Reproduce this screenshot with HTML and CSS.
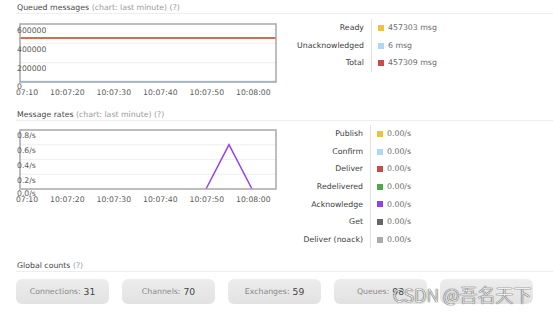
FILE: index.html
```html
<!DOCTYPE html>
<html lang="en">

<head>
    <meta charset="UTF-8">
    <meta name="viewport" content="width=device-width, initial-scale=1.0">
    <title>Overview</title>
    <link rel="stylesheet" href="styles.css">
</head>

<body>
    <div class="page">
        <h2 class="title">Queued messages <span class="muted">(chart: last minute) (?)</span></h2>
        <div class="row">
            <svg class="chart" width="264" height="82" viewBox="16 18 264 82">
                <line class="grid" x1="20" y1="43.3" x2="276" y2="43.3" />
                <line class="grid" x1="20" y1="62.7" x2="276" y2="62.7" />
                <polyline class="series" stroke="#edc240" points="20,38 276,38" />
                <polyline class="series" stroke="#cb4b4b" points="20,38 276,38" />
                <polyline class="series" stroke="#afd8f8" points="20,81.4 276,81.4" />
                <rect class="frame" x="20" y="24" width="256" height="58" />
                <text class="tick" x="17" y="32.8">600000</text>
                <text class="tick" x="17" y="51.8">400000</text>
                <text class="tick" x="17" y="70.8">200000</text>
                <text class="tick" x="17" y="88.8">0</text>
                <text class="tick mid" x="20.8" y="95">10:07:10</text>
                <text class="tick mid" x="67.3" y="95">10:07:20</text>
                <text class="tick mid" x="113.8" y="95">10:07:30</text>
                <text class="tick mid" x="160.3" y="95">10:07:40</text>
                <text class="tick mid" x="206.8" y="95">10:07:50</text>
                <text class="tick mid" x="253.3" y="95">10:08:00</text>
            </svg>
            <div class="legend legend-queued">
                <span class="label">Ready</span>
                <span class="value"><i class="swatch yellow"></i>457303 msg</span>
                <span class="label">Unacknowledged</span>
                <span class="value"><i class="swatch blue"></i>6 msg</span>
                <span class="label">Total</span>
                <span class="value"><i class="swatch red"></i>457309 msg</span>
            </div>
        </div>

        <h2 class="title title-rates">Message rates <span class="muted">(chart: last minute) (?)</span></h2>
        <div class="row">
            <svg class="chart chart-rates" width="264" height="82" viewBox="16 124 264 82">
                <line class="grid" x1="20" y1="144.75" x2="276" y2="144.75" />
                <line class="grid" x1="20" y1="159.5" x2="276" y2="159.5" />
                <line class="grid" x1="20" y1="174.25" x2="276" y2="174.25" />
                <polyline class="series" stroke="#9440ed" points="206,189 229,144.75 252,189" />
                <rect class="frame" x="20" y="130" width="256" height="59" />
                <text class="tick" x="17" y="137.8">0.8/s</text>
                <text class="tick" x="17" y="152.8">0.6/s</text>
                <text class="tick" x="17" y="167.8">0.4/s</text>
                <text class="tick" x="17" y="182.8">0.2/s</text>
                <text class="tick" x="17" y="195.5">0.0/s</text>
                <text class="tick mid" x="20.8" y="201.5">10:07:10</text>
                <text class="tick mid" x="67.3" y="201.5">10:07:20</text>
                <text class="tick mid" x="113.8" y="201.5">10:07:30</text>
                <text class="tick mid" x="160.3" y="201.5">10:07:40</text>
                <text class="tick mid" x="206.8" y="201.5">10:07:50</text>
                <text class="tick mid" x="253.3" y="201.5">10:08:00</text>
            </svg>
            <div class="legend legend-rates">
                <span class="label">Publish</span>
                <span class="value"><i class="swatch yellow"></i>0.00/s</span>
                <span class="label">Confirm</span>
                <span class="value"><i class="swatch blue"></i>0.00/s</span>
                <span class="label">Deliver</span>
                <span class="value"><i class="swatch red"></i>0.00/s</span>
                <span class="label">Redelivered</span>
                <span class="value"><i class="swatch green"></i>0.00/s</span>
                <span class="label">Acknowledge</span>
                <span class="value"><i class="swatch purple"></i>0.00/s</span>
                <span class="label">Get</span>
                <span class="value"><i class="swatch dark"></i>0.00/s</span>
                <span class="label">Deliver (noack)</span>
                <span class="value"><i class="swatch grey"></i>0.00/s</span>
            </div>
        </div>

        <h2 class="title title-counts">Global counts <span class="muted">(?)</span></h2>
        <div class="counts">
            <div class="count">Connections: <b>31</b></div>
            <div class="count">Channels: <b>70</b></div>
            <div class="count">Exchanges: <b>59</b></div>
            <div class="count">Queues: <b>98</b></div>
            <div class="count"></div>
        </div>
    </div>

    <div class="watermark">CSDN @吾名天下</div>
</body>

</html>
```

FILE: styles.css
```css
* {
    margin: 0px;
    padding: 0px;
    box-sizing: border-box;
}

body {
    font-family: "DejaVu Sans", Verdana, sans-serif;
    background: #fff;
    color: #444;
    overflow: hidden;
}

.page {
    padding-left: 16px;
}

.title {
    font-size: 7.8px;
    font-weight: normal;
    color: #484848;
    line-height: 11px;
    padding-top: 2px;
    padding-left: 1px;
    border-bottom: 1px solid #eee;
}

.title .muted {
    color: #9a9a9a;
}

.title-rates {
    margin-top: 7px;
}

.title-counts {
    margin-top: 9.6px;
}

.row {
    display: flex;
    align-items: flex-start;
}

.chart {
    display: block;
    margin-top: 4px;
    flex-shrink: 0;
}

.chart-rates {
    margin-top: 3px;
}

.chart .grid {
    stroke: #efefef;
    stroke-width: 1;
}

.chart .frame {
    fill: none;
    stroke: #a8a8a8;
    stroke-width: 1.5;
}

.chart .series {
    fill: none;
    stroke-width: 1.5;
}

.chart .tick {
    font-size: 7.7px;
    fill: #5a5a5a;
}

.chart .mid {
    text-anchor: middle;
}

.legend {
    display: grid;
    grid-template-columns: 91px auto;
    font-size: 7.8px;
    line-height: 17.5px;
    padding-top: 5.25px;
}

.legend-rates {
    grid-template-columns: 90px auto;
    line-height: 17.6px;
    padding-top: 4.2px;
}

.legend .label {
    text-align: right;
    padding-right: 7px;
    color: #3c3c3c;
    white-space: nowrap;
}

.legend .value {
    display: flex;
    align-items: center;
    gap: 4px;
    padding-left: 6px;
    border-left: 1px solid #e2e2e2;
    color: #6a6a6a;
    white-space: nowrap;
}

.swatch {
    display: block;
    width: 6px;
    height: 6px;
}

.yellow { background: #edc240; }
.blue { background: #afd8f8; }
.red { background: #cb4b4b; }
.green { background: #4da74d; }
.purple { background: #9440ed; }
.dark { background: #666; }
.grey { background: #aaa; }

.counts {
    display: flex;
    gap: 13px;
    margin-top: 7px;
}

.count {
    width: 93px;
    height: 25px;
    border-radius: 6px;
    background: linear-gradient(#ededed, #e2e2e2);
    font-size: 7.8px;
    color: #888;
    display: flex;
    align-items: center;
    justify-content: center;
    gap: 3px;
    white-space: nowrap;
}

.count b {
    font-weight: normal;
    font-size: 9.2px;
    color: #444;
}

.watermark {
    position: absolute;
    left: 393px;
    top: 281px;
    font-family: "Noto Sans CJK SC", "Noto Sans", sans-serif;
    font-size: 18px;
    font-weight: 300;
    color: rgba(255, 255, 255, 0.92);
    text-shadow: 0 0 1px #555, 0 0 1px #555, 0 0 1px #777;
    white-space: nowrap;
}
```
